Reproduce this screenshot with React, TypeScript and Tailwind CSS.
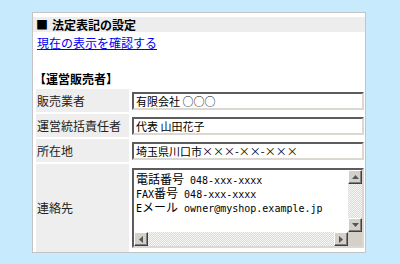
import React from 'react';

const jp = "font-['Noto_Sans_CJK_JP',sans-serif]";
const mono = "font-['DejaVu_Sans_Mono',monospace] text-[10px]";

const inset =
  'border-2 border-t-[#5c5c5c] border-l-[#5c5c5c] border-b-[#dcd8d0] border-r-[#dcd8d0] bg-white';

const Arrow = ({ dir }: { dir: 'up' | 'down' | 'left' | 'right' }) => {
  if (dir === 'up' || dir === 'down') {
    return (
      <svg width="7" height="4" viewBox="0 0 7 4">
        <polygon points={dir === 'up' ? '3.5,0 7,4 0,4' : '0,0 7,0 3.5,4'} fill="#555" />
      </svg>
    );
  }
  return (
    <svg width="4" height="7" viewBox="0 0 4 7">
      <polygon points={dir === 'left' ? '4,0 4,7 0,3.5' : '0,0 4,3.5 0,7'} fill="#555" />
    </svg>
  );
};

const ScrollButton = ({ dir }: { dir: 'up' | 'down' | 'left' | 'right' }) => (
  <div className="flex h-[14px] w-[14px] shrink-0 items-center justify-center border border-t-white border-l-white border-b-[#404040] border-r-[#404040] bg-[#d4d0c8] shadow-[inset_-1px_-1px_#808080]">
    <Arrow dir={dir} />
  </div>
);

const Track = ({ className }: { className: string }) => (
  <div
    className={`${className} bg-[repeating-conic-gradient(#dedbd4_0_25%,#f6f6f4_0_50%)] bg-[length:2px_2px]`}
  />
);

const TextInput = ({ value }: { value: string }) => (
  <div className={`h-[18px] ${inset} pl-[2px] text-[11px] leading-[14px] text-black ${jp} whitespace-pre`}>
    {value}
  </div>
);

const ContactBox = () => (
  <div className={`flex h-[80px] flex-col ${inset}`}>
    <div className="flex min-h-0 flex-1">
      <div className={`flex-1 pl-[2px] pt-[2px] text-[12px] text-black ${jp}`}>
        <div className="h-[14px] whitespace-pre leading-[14px]">
          電話番号<span className={mono}> 048-xxx-xxxx</span>
        </div>
        <div className="h-[14px] whitespace-pre leading-[14px]">
          <span className={mono}>FAX</span>番号<span className={mono}> 048-xxx-xxxx</span>
        </div>
        <div className="h-[14px] whitespace-pre leading-[14px]">
          <span className={mono}>E</span>メール<span className={mono}> owner@myshop.example.jp</span>
        </div>
      </div>
      <div className="flex w-[14px] flex-col">
        <ScrollButton dir="up" />
        <Track className="flex-1" />
        <ScrollButton dir="down" />
      </div>
    </div>
    <div className="flex h-[14px]">
      <ScrollButton dir="left" />
      <Track className="flex-1" />
      <ScrollButton dir="right" />
      <div className="w-[14px] bg-[#d4d0c8]" />
    </div>
  </div>
);

const rows = [
  { label: '販売業者', value: '有限会社 ○○○' },
  { label: '運営統括責任者', value: '代表 山田花子' },
  { label: '所在地', value: '埼玉県川口市×××-××-×××' },
];

export default function App() {
  return (
    <div className={`h-[264px] w-[400px] bg-[#c7ebfc] pl-[32px] pt-[12px] ${jp}`}>
      <div className="flex h-[241px] w-[334px] flex-col overflow-hidden border border-[#c4c4c4] bg-white pt-[4px]">
        <div className="flex h-[15px] items-center bg-[#ededed] pl-[3px] text-[12px] font-bold leading-[15px] text-black">
          <span>■</span>
          <span className="ml-[4px]">法定表記の設定</span>
        </div>

        <div className="mt-[3px] pl-[4px] text-[12px] leading-[16px]">
          <a href="#" className="text-[#0000ee] underline">
            現在の表示を確認する
          </a>
        </div>

        <div className="mt-[20px] pl-[1px] text-[12px] font-bold leading-[16px] text-black">
          【運営販売者】
        </div>

        <div className="ml-[3px] mt-[2px] grid flex-1 grid-cols-[93px_1fr] grid-rows-[23px_23px_23px_1fr] gap-[2px] text-[12px] text-[#222]">
          {rows.map((row) => (
            <React.Fragment key={row.label}>
              <div className="flex items-center bg-[#eeeeee] pl-[1px]">{row.label}</div>
              <div className="px-[1px] pt-[3px]">
                <TextInput value={row.value} />
              </div>
            </React.Fragment>
          ))}
          <div className="flex items-center bg-[#eeeeee] pl-[1px]">連絡先</div>
          <div className="px-[1px] pt-[4px]">
            <ContactBox />
          </div>
        </div>
      </div>
    </div>
  );
}
